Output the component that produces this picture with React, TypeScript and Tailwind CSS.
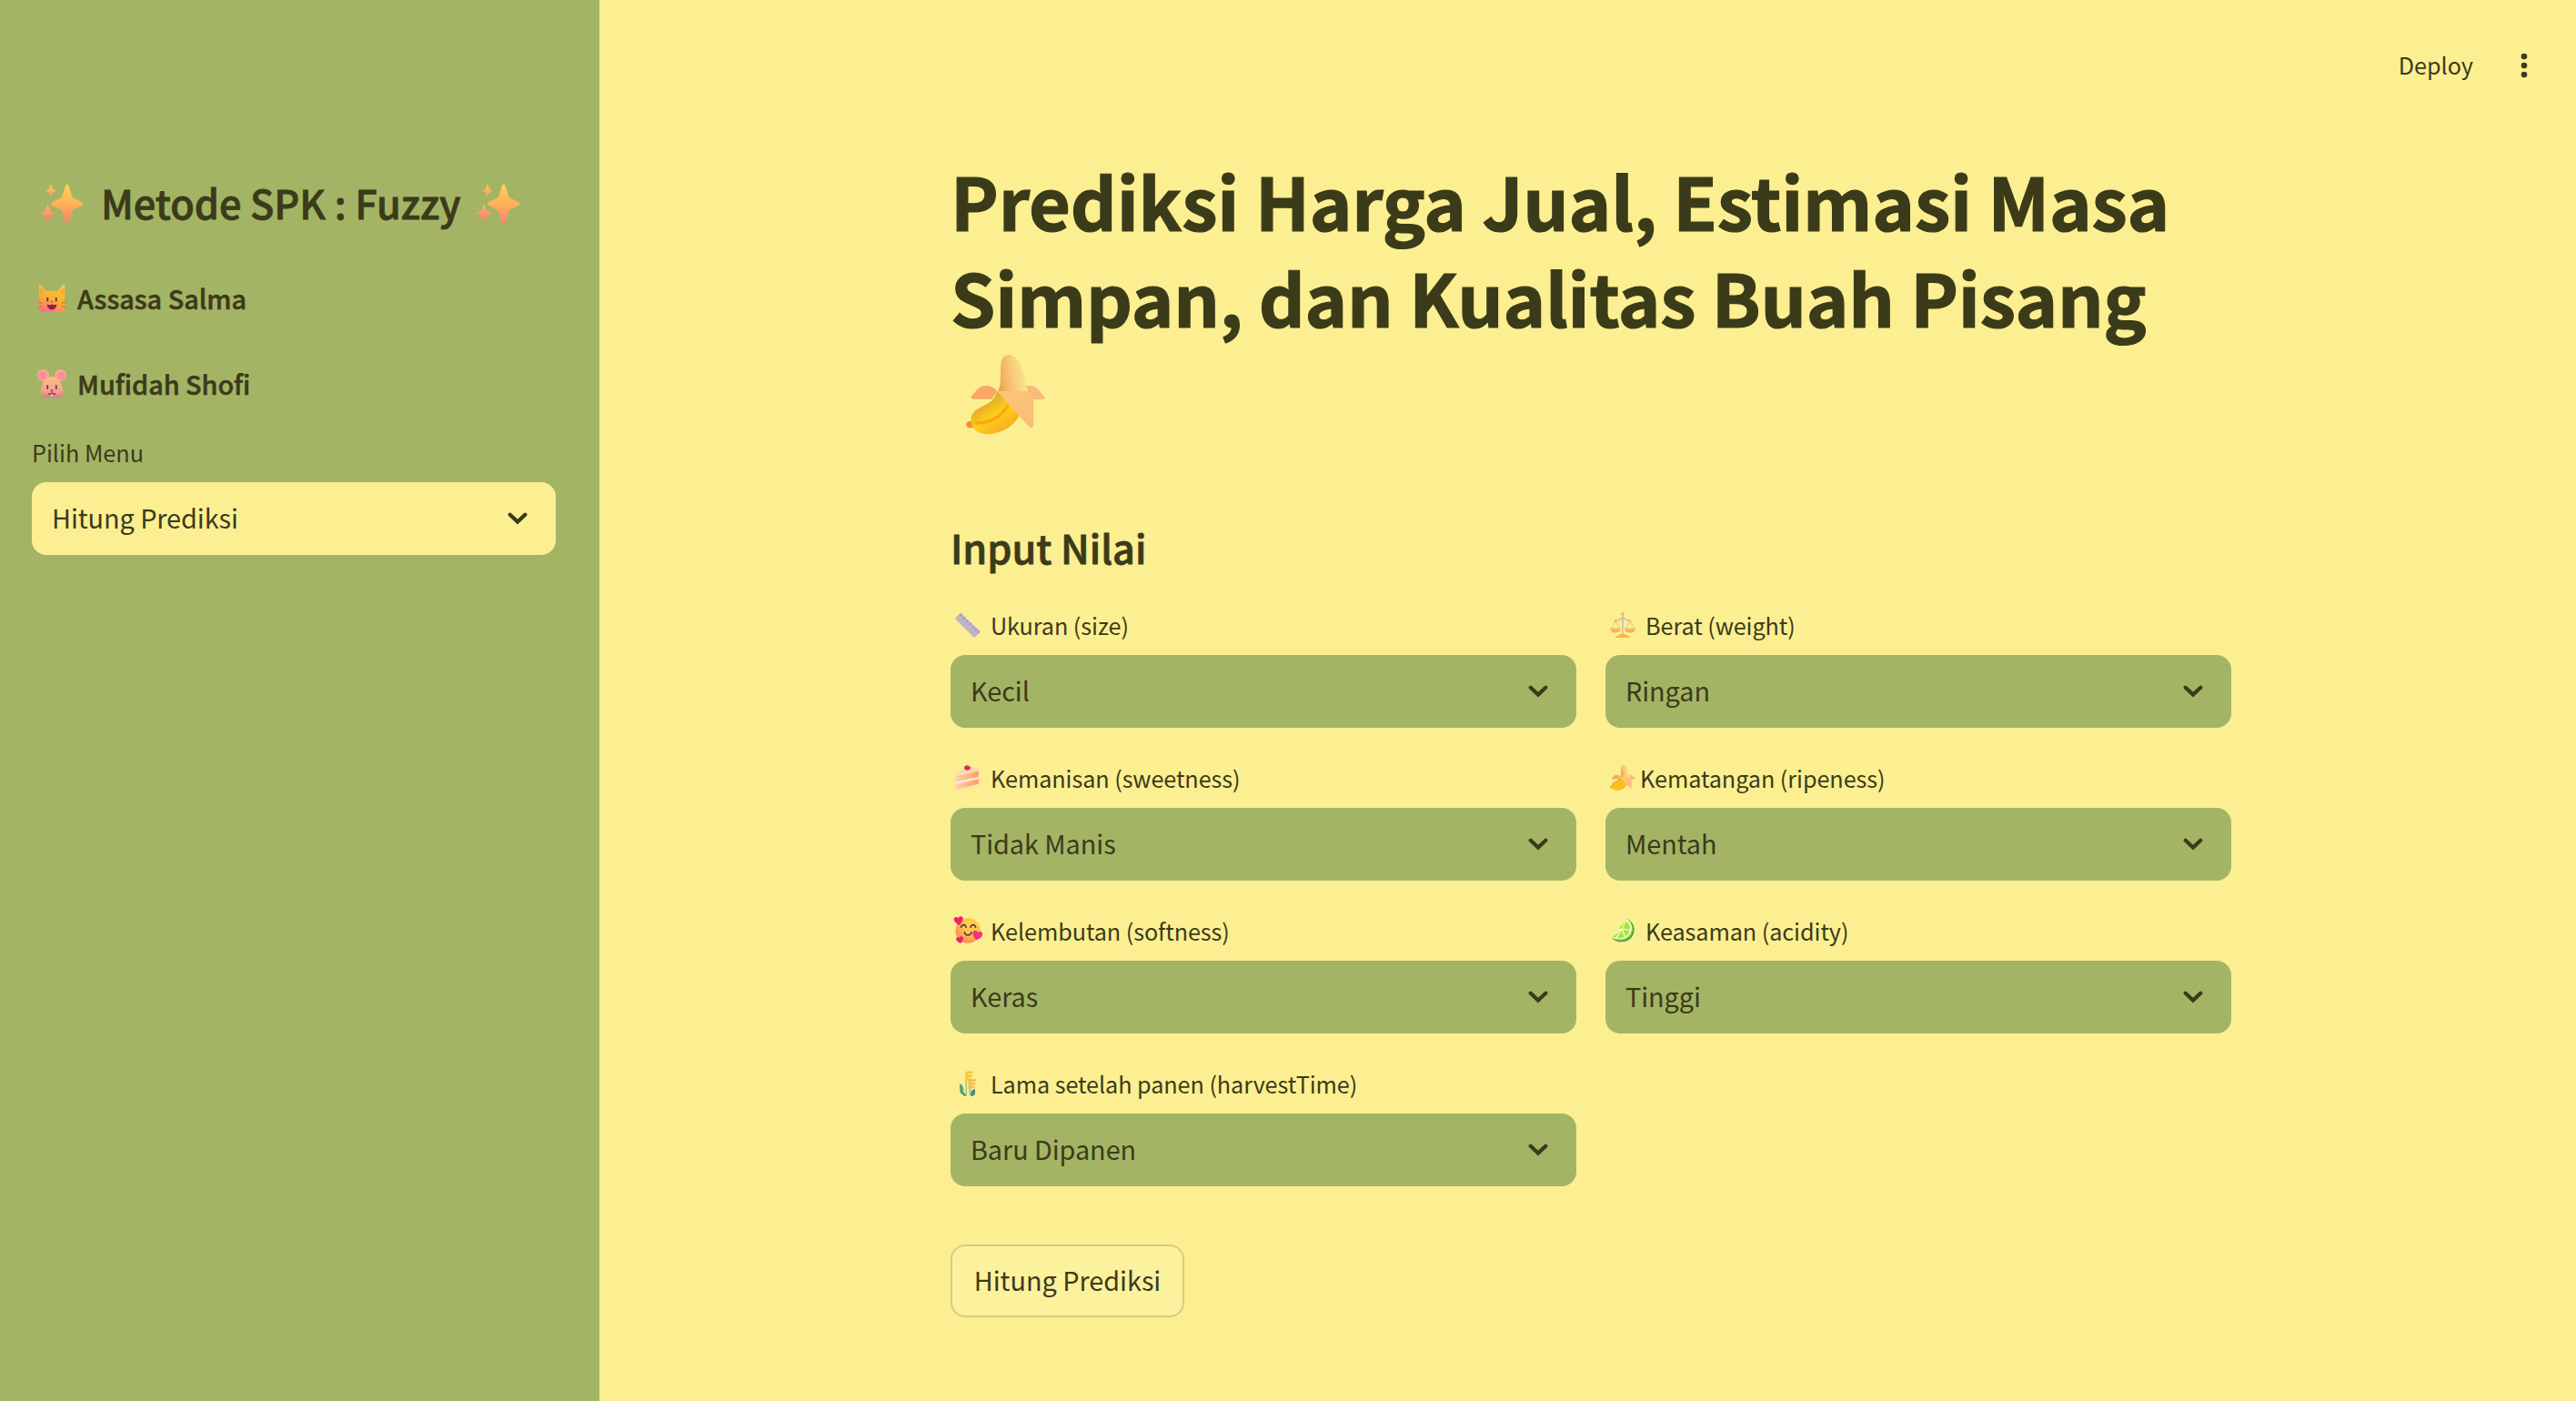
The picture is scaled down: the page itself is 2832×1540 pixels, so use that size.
import type { ReactNode } from "react";

function Art({ className, children }: { className: string; children: ReactNode }) {
  return (
    <svg viewBox="0 0 32 32" className={`shrink-0 ${className}`} fill="none" aria-hidden="true">
      {children}
    </svg>
  );
}

function Sparkles({ id }: { id: string }) {
  return (
    <Art className="mt-[3px] size-[54px]">
      <defs>
        <linearGradient id={id} x1="0" y1="3" x2="0" y2="29" gradientUnits="userSpaceOnUse">
          <stop offset="0" stopColor="#FFD257" />
          <stop offset="0.5" stopColor="#FFB257" />
          <stop offset="1" stopColor="#FF7F6E" />
        </linearGradient>
        <linearGradient id={`${id}a`} x1="0" y1="3" x2="0" y2="11" gradientUnits="userSpaceOnUse">
          <stop offset="0" stopColor="#FFCB57" />
          <stop offset="1" stopColor="#F79C68" />
        </linearGradient>
        <linearGradient id={`${id}b`} x1="0" y1="16" x2="0" y2="28" gradientUnits="userSpaceOnUse">
          <stop offset="0" stopColor="#FFB765" />
          <stop offset="1" stopColor="#FF7A70" />
        </linearGradient>
      </defs>
      <path fill={`url(#${id})`} d="M18.3 4.1c.3-1 1.9-1 2.2 0l2 6.5c.3 1 1.100 1.900 2.100 2.200l4.600 2.100c.9.4.9 1.800 0 2.200l-4.600 2.100c-1 .4-1.800 1.200-2.100 2.200l-2 6.500c-.3 1-1.900 1-2.200 0l-2-6.500c-.3-1-1.100-1.800-2.100-2.200l-4.600-2.100c-.9-.4-.9-1.800 0-2.200l4.600-2.100c1-.4 1.800-1.200 2.100-2.200z" />
      <path fill={`url(#${id}a)`} d="M8.500 3.800c.1-.5.700-.5.800 0l.7 2c.1.400.4.600.7.800l1.400.6c.3.100.3.500 0 .6l-1.400.6c-.3.100-.6.400-.7.700l-.7 1.900c-.1.400-.7.400-.8 0l-.7-1.900c-.1-.3-.4-.6-.7-.7l-1.400-.6c-.3-.1-.3-.5 0-.6l1.400-.6c.3-.2.600-.4.700-.8z" />
      <path fill={`url(#${id}b)`} d="M6.200 17c.1-.5.900-.5 1 0l.9 2.900c.2.500.5.900 1 1.100l2 .7c.4.200.4.700 0 .9l-2 .8c-.5.200-.8.600-1 1.100l-.9 2.900c-.1.500-.9.500-1 0l-.9-2.900c-.2-.5-.5-.9-1-1.100l-2-.8c-.4-.2-.4-.7 0-.9l2-.7c.5-.2.800-.6 1-1.100z" />
    </Art>
  );
}

function Cat() {
  return (
    <Art className="size-9">
      <defs>
        <linearGradient id="cat" x1="24" y1="3" x2="15" y2="30" gradientUnits="userSpaceOnUse">
          <stop offset="0" stopColor="#FFC83B" />
          <stop offset="0.6" stopColor="#FBAB30" />
          <stop offset="0.85" stopColor="#FF8B6A" />
          <stop offset="1" stopColor="#FF6F8C" />
        </linearGradient>
      </defs>
      <path fill="url(#cat)" d="M3.500 3.400c0-1.300 1.200-1.500 1.900-.6L10 8.600h12l4.600-5.800c.7-.9 1.900-.7 1.900.6v22.800c0 1.900-1.200 2.800-2.700 2.800H6.200c-1.500 0-2.700-.9-2.700-2.800z" />
      <path fill="#F3A437" d="M4.500 5.500v6l3.800-2zM27.500 5.500v6l-3.800-2z" />
      <path fill="#433B6B" d="M11 15.200h1.600v4h-1.600zM19.400 15.200H21v4h-1.600z" />
      <path fill="#FF3E8E" d="M14.300 18.500h3.400l-1.700 2.300z" />
      <path fill="#8C1F55" d="M11.300 21.500c1.500 1.300 3.500 1 4.700 0 1.200 1 3.200 1.300 4.700 0 0 3-1.700 5.500-4.700 5.500s-4.700-2.500-4.700-5.500z" />
      <path stroke="#DE7832" strokeWidth="1.100" strokeLinecap="round" d="M2.500 19.500l4 1.300M2.500 25l4-1.500M29.500 19.500l-4 1.300M29.500 25l-4-1.500" />
    </Art>
  );
}

function Mouse() {
  return (
    <Art className="size-9">
      <defs>
        <linearGradient id="mouse" x1="16" y1="8" x2="16" y2="30" gradientUnits="userSpaceOnUse">
          <stop offset="0" stopColor="#FFBC8C" />
          <stop offset="0.65" stopColor="#F6A588" />
          <stop offset="1" stopColor="#D87882" />
        </linearGradient>
      </defs>
      <circle cx="7.500" cy="7.500" r="5.800" fill="#F2AF8A" />
      <circle cx="24.500" cy="7.500" r="5.800" fill="#F2AF8A" />
      <circle cx="7" cy="8" r="4.200" fill="#FF8BA2" />
      <circle cx="25" cy="8" r="4.200" fill="#FF8BA2" />
      <path fill="url(#mouse)" d="M16 8.800c6 0 8.500 3.500 9.500 8.500.6 2.500 1.500 4 1.500 7 0 3.500-2.500 5.200-4.500 5.200h-13c-2 0-4.500-1.700-4.500-5.200 0-3 .9-4.500 1.500-7 1-5 3.500-8.500 9.500-8.500z" />
      <path fill="#47405F" d="M11 17h1.500v4h-1.500zM19.500 17H21v4h-1.500z" />
      <path fill="#FF3285" d="M14 21.500h4L16 24.200z" />
      <path stroke="#57364D" strokeWidth="1.100" d="M12.800 25c.5 1.900 2.700 1.900 3.200 0 .5 1.900 2.700 1.900 3.200 0" />
      <path fill="#fff" d="M15 26.300h2v1.400h-2z" />
    </Art>
  );
}

function Banana({ id, className }: { id: string; className: string }) {
  return (
    <Art className={className}>
      <defs>
        <linearGradient id={`${id}f`} x1="13" y1="9.500" x2="22.500" y2="8" gradientUnits="userSpaceOnUse">
          <stop offset="0" stopColor="#EDA254" />
          <stop offset="0.5" stopColor="#F8C877" />
          <stop offset="1" stopColor="#FCE38C" />
        </linearGradient>
        <linearGradient id={`${id}b`} x1="7" y1="18" x2="15" y2="30" gradientUnits="userSpaceOnUse">
          <stop offset="0" stopColor="#DBA32C" />
          <stop offset="0.5" stopColor="#FFCF18" />
          <stop offset="1" stopColor="#F9A824" />
        </linearGradient>
        <linearGradient id={`${id}p`} x1="15" y1="15" x2="26" y2="27" gradientUnits="userSpaceOnUse">
          <stop offset="0" stopColor="#FBC679" />
          <stop offset="1" stopColor="#FBBB76" />
        </linearGradient>
      </defs>
      <path fill="#FB8B29" d="M4.500 25.300H3c-.6 0-1 .6-1 1.200s.4 1.100 1 1.100h2z" />
      <path fill="#F8A862" d="M12.900 14.800c-1.100-1.300-2.100-2-3.600-2-1.800 0-3 .6-3.700 1.600l-1.700 2c-.4.500 0 1.100.7 1.100h6.500z" />
      <path fill="#F9BA7D" d="M22.900 12.800h1.500c1.500 0 2.400.6 3.100 1.500l2 2.300c.4.500 0 1-.5 1H25z" />
      <path fill={`url(#${id}b)`} d="M12.900 14.700c-.4 1.600-1.400 3.200-3 4.200-2.400 1.500-6.200 2.300-6.200 6 0 3.400 2.700 4.900 5.700 4.900 5.200 0 9.100-2.700 11.300-6.500z" />
      <path stroke="#FBA912" strokeWidth="1.200" strokeLinecap="round" d="M5.700 25.900c5 0 8.500-2.300 10.900-6" />
      <path fill={`url(#${id}f)`} d="M13.200 14.900c.7-1.800.9-3.700.9-5.900 0-4 0-7.100 2.900-7.100 3.500 0 6 6 6 13z" />
      <path fill={`url(#${id}p)`} d="M12.800 14.700h9.800c1.800 0 3 1.300 3 3v9c0 .9-1.100 1.100-1.700.3z" />
      <path stroke="#FBC35E" strokeWidth=".3" d="M22.800 14.800c1.700 0 2.700 1.200 2.700 3v9" />
    </Art>
  );
}

function Ruler() {
  return (
    <Art className="size-8">
      <path fill="#BDB5C4" d="M7.200 2.900c.4-.4.900-.4 1.300 0l20.700 19.800c.5.500.5 1 0 1.500l-5.300 5.100c-.5.500-1 .5-1.500 0L2.400 9.800c-.5-.5-.5-1 0-1.500z" />
      <path stroke="#A082F5" strokeWidth="1.500" strokeLinecap="round" d="M9.200 4.800l-.7.700M12.500 8l-1 1M15.800 11.200l-.7.700M19 14.300l-1 1M22.300 17.500l-.7.700M25.500 20.600l-1 1M28.300 23.200l-.7.700" />
    </Art>
  );
}

function Scales() {
  return (
    <Art className="size-8">
      <defs>
        <linearGradient id="pan" x1="0" y1="19" x2="0" y2="25" gradientUnits="userSpaceOnUse">
          <stop offset="0" stopColor="#FFC83F" />
          <stop offset="1" stopColor="#FF9D6B" />
        </linearGradient>
      </defs>
      <path fill="#C9BBBE" d="M15.200 5h1.600v22h-1.600z" />
      <path stroke="#C4B5BE" strokeWidth="1.300" strokeLinecap="round" d="M8.500 11.200c3.500 0 4.500-2.700 7.500-2.700s4 2.700 7.500 2.700" />
      <path stroke="#CDBCC5" strokeWidth=".9" d="M8 12L3.500 20M8.500 12l4 8M23.500 12l-4 8M24 12l4.500 8" />
      <circle cx="16" cy="4" r="1.900" fill="#FDBB35" />
      <circle cx="8.300" cy="11.300" r="1.500" fill="#FDBB45" />
      <circle cx="23.700" cy="11.300" r="1.500" fill="#FDBB45" />
      <path fill="url(#pan)" d="M2 19.500h12c0 3-2.500 5-6 5s-6-2-6-5zM18 19.500h12c0 3-2.500 5-6 5s-6-2-6-5z" />
      <path fill="#FBB637" d="M13.500 26h5c.5 1.300 3 1.300 5 2.500.7.600.5 1.500-.5 1.500H9c-1 0-1.200-.9-.5-1.500 2-1.200 4.500-1.200 5-2.500z" />
    </Art>
  );
}

function Cake() {
  return (
    <Art className="size-8">
      <defs>
        <linearGradient id="sponge" x1="3" y1="0" x2="29" y2="0" gradientUnits="userSpaceOnUse">
          <stop offset="0" stopColor="#FFD0A6" />
          <stop offset="1" stopColor="#FF9C4E" />
        </linearGradient>
      </defs>
      <path fill="#FADCCB" d="M2 12L14 4.500c4-2 10-.5 15.500 3v15c0 .6-.4 1-1 1.200L4 29.900c-1 .3-2-.3-2-1.200z" />
      <path fill="#F6D8A4" d="M2.500 11.700L14 4.700c4-2 10-.5 15.300 3z" />
      <path fill="url(#sponge)" d="M2.600 14.200L27.800 8.700v6.500L2.600 20.900zM2.600 23L27.800 17.300v5.200L2.600 29z" />
      <path fill="#FFE3EA" d="M2 20.400l27.500-6v2.300L2 22.800z" />
      <path fill="#E5294D" d="M12 5c0-1.700 1.400-2.500 3.100-2.500 2.100 0 4.200 1.100 3.700 3-.3 1.500-2.100 2.600-4 2.200-1.700-.4-2.800-1.500-2.800-2.700z" />
      <path fill="#5FA23C" d="M14 3l1.300-1.600.7 1.300 1.600.4-1.800.6z" />
    </Art>
  );
}

function LovingFace() {
  const heart = "M0 3.700C-2.700 2-4-.1-4-1.700-4-4-1.200-4.600 0-2.500 1.200-4.600 4-4 4-1.700 4-.1 2.700 2 0 3.700z";
  return (
    <Art className="size-8">
      <defs>
        <radialGradient id="face" cx="20" cy="10" r="20" gradientUnits="userSpaceOnUse">
          <stop offset="0" stopColor="#FFD94A" />
          <stop offset="0.6" stopColor="#FFBA4B" />
          <stop offset="1" stopColor="#FF8B57" />
        </radialGradient>
      </defs>
      <circle cx="16.200" cy="16" r="13.800" fill="url(#face)" />
      <path stroke="#5A3B4B" strokeWidth="1.600" strokeLinecap="round" d="M8.500 12.300c.6-3.600 5-3.600 5.600 0M19 12.300c.6-3.600 5-3.600 5.600 0M12.300 17.700c.8 4.300 7 4.300 7.800 0" />
      <path transform="translate(6 5.300) rotate(-8) scale(1.250)" fill="#F02368" d={heart} />
      <path transform="translate(26.300 21.500) rotate(14) scale(1.350)" fill="#FA2C83" d={heart} />
      <path transform="translate(7.300 26.300) rotate(-10)" fill="#E8246B" d={heart} />
    </Art>
  );
}

function Lime() {
  return (
    <Art className="size-8">
      <path fill="#43925E" d="M20.500 3.200c6 2 9 8 7.800 14.300C27 24.500 21 28.500 14 28.300 9 28 5.500 26 4.500 24z" />
      <path fill="#7CD12B" d="M20 3c5.800 2.500 8.300 8.300 7 14.300-1.500 6.500-7.300 10-13.500 9.700C8.800 26.700 5 25 4.200 23z" />
      <path fill="#F3FBC0" d="M20 3c5 3 7 8 5.500 13.500-1.500 5.700-6.500 9-12.500 9-4.500 0-8-1-8.800-2.500z" />
      <path fill="#A6E23B" d="M19.400 5.500c3.500 2.500 4.900 5.300 4.500 9l-7.400-.7zM23.700 16c-.7 2.700-2.300 4.800-4.600 6.200l-2.800-7.100zM17.500 23c-2.400 1-5 1.200-7.500.9l5-8.200zM8.200 23.500l-3-.8L13.500 15.500zM18 6.800l-2.600 6.400-4 1z" />
    </Art>
  );
}

function Wheat() {
  return (
    <Art className="size-8">
      <path stroke="#94BE83" strokeWidth="1.300" d="M14.300 12v18M18.300 18v11" />
      <path fill="#63A66C" d="M7 16c2.500 1 4.300 3.500 4.300 6v5.500C8.500 26.500 7 25 7 22z" />
      <path fill="#438F8A" d="M24 22v4.500c0 2.300-1.700 3.500-4.700 3.500v-3.500c0-2.500 2-4 4.700-4.500zM7.500 24l6 3.500V30h-1.500c0-1.800-4.500-2.500-4.500-6z" />
      <path fill="#FAC53F" d="M13.300 4.500c0-1.300.9-2 2-2h7c0 2-1.300 2.700-3 2.700h-3v1.300h5c0 2-1.500 2.500-3 2.500h-2v1.200h4c0 1.800-1 2.600-3 2.600h-2l-2 1.800z" />
      <path fill="#FDB843" d="M16.500 13c0-1.200.8-1.800 2-1.800h6.800c0 2-1.300 2.600-3 2.600h-3V15h5.300c0 2-1.500 2.500-3.300 2.500h-2v1.200h4.200c0 1.900-1.200 2.600-3.200 2.600h-2l-1.800 1.700z" />
    </Art>
  );
}

function Chevron() {
  return (
    <svg viewBox="0 0 22 14" className="h-[14px] w-[22px] shrink-0" fill="none" aria-hidden="true">
      <path d="M2.700 2.800L11 10.600l8.300-7.800" stroke="#3B3B1A" strokeWidth="4.200" strokeLinecap="round" />
    </svg>
  );
}

function Select({ value, light }: { value: string; light?: boolean }) {
  return (
    <button
      className={`flex h-20 w-full items-center justify-between rounded-2xl pr-[31px] pl-[22px] ${light ? "bg-[#FCEF91]" : "bg-[#A4B465]"}`}
    >
      <span className="pb-[3px] text-[28.8px] leading-[40px] tracking-[-0.05px]">{value}</span>
      <Chevron />
    </button>
  );
}

function Field({ icon, label, value, tight }: { icon: ReactNode; label: string; value: string; tight?: boolean }) {
  return (
    <div>
      <div className={`mb-[13px] flex h-10 items-center pl-[3px] ${tight ? "gap-[3px]" : "gap-[9px]"}`}>
        {icon}
        <span className="text-[25.2px] leading-[40px] tracking-[-0.06px] whitespace-nowrap">{label}</span>
      </div>
      <Select value={value} />
    </div>
  );
}

export default function App() {
  return (
    <div className="flex h-[1540px] w-[2832px] overflow-hidden bg-[#FCEF91] font-['Noto_Sans_CJK_SC',sans-serif] text-[#3B3B1A]">
      <aside className="w-[659px] shrink-0 bg-[#A4B465] pt-[193px] pr-12 pl-[35px]">
        <h2 className="flex h-[58px] items-center pl-1.5 text-[43.2px] leading-[58px] font-medium whitespace-nowrap [-webkit-text-stroke:0.8px_#3B3B1A]">
          <Sparkles id="sparkLeft" />
          <span className="mr-[15px] ml-4">Metode SPK : Fuzzy</span>
          <Sparkles id="sparkRight" />
        </h2>
        <p className="mt-[57px] flex h-10 items-center gap-[10px] pl-1 text-[28.8px] leading-[40px] font-medium [-webkit-text-stroke:0.55px_#3B3B1A]">
          <Cat />
          <span>Assasa Salma</span>
        </p>
        <p className="mt-[54px] flex h-10 items-center gap-[10px] pl-1 text-[28.8px] leading-[40px] font-medium [-webkit-text-stroke:0.55px_#3B3B1A]">
          <Mouse />
          <span>Mufidah Shofi</span>
        </p>
        <p className="mt-[35px] mb-[13px] text-[25.2px] leading-[40px]">Pilih Menu</p>
        <Select value="Hitung Prediksi" light />
      </aside>

      <main className="grow">
        <header className="flex h-36 items-center justify-end pr-[47px]">
          <span className="mr-[46px] pb-[3px] text-[25.2px] leading-[40px]">Deploy</span>
          <svg viewBox="0 0 20 32" className="h-8 w-5" fill="#3B3B1A" aria-hidden="true">
            <circle cx="10" cy="6" r="3.300" />
            <circle cx="10" cy="16" r="3.300" />
            <circle cx="10" cy="26" r="3.300" />
          </svg>
        </header>
        <div className="ml-[386px] w-[1408px] pt-[23px]">
          <h1 className="text-[79.2px] leading-[106px] font-bold whitespace-nowrap [-webkit-text-stroke:1.2px_#3B3B1A]">
            <span className="block tracking-[-0.18px]">Prediksi Harga Jual, Estimasi Masa</span>
            <span className="block tracking-[-0.27px]">Simpan, dan Kualitas Buah Pisang</span>
            <span className="flex h-[106px] items-center pt-[3px] pl-[11px]">
              <Banana id="titleBanana" className="size-[100px]" />
            </span>
          </h1>
          <h3 className="mt-[87px] mb-[37px] text-[43.2px] leading-[58px] font-medium [-webkit-text-stroke:0.8px_#3B3B1A]">Input Nilai</h3>
          <div className="grid grid-cols-2 gap-x-8 gap-y-[35px]">
            <Field icon={<Ruler />} label="Ukuran (size)" value="Kecil" />
            <Field icon={<Scales />} label="Berat (weight)" value="Ringan" />
            <Field icon={<Cake />} label="Kemanisan (sweetness)" value="Tidak Manis" />
            <Field icon={<Banana id="labelBanana" className="size-8" />} label="Kematangan (ripeness)" value="Mentah" tight />
            <Field icon={<LovingFace />} label="Kelembutan (softness)" value="Keras" />
            <Field icon={<Lime />} label="Keasaman (acidity)" value="Tinggi" />
            <Field icon={<Wheat />} label="Lama setelah panen (harvestTime)" value="Baru Dipanen" />
          </div>
          <button className="mt-16 flex h-20 w-[257px] items-center justify-center rounded-2xl border-2 border-[#D6CD80] bg-[#FCF19D]">
            <span className="pb-[3px] text-[28.8px] leading-[40px] whitespace-nowrap">Hitung Prediksi</span>
          </button>
        </div>
      </main>
    </div>
  );
}
